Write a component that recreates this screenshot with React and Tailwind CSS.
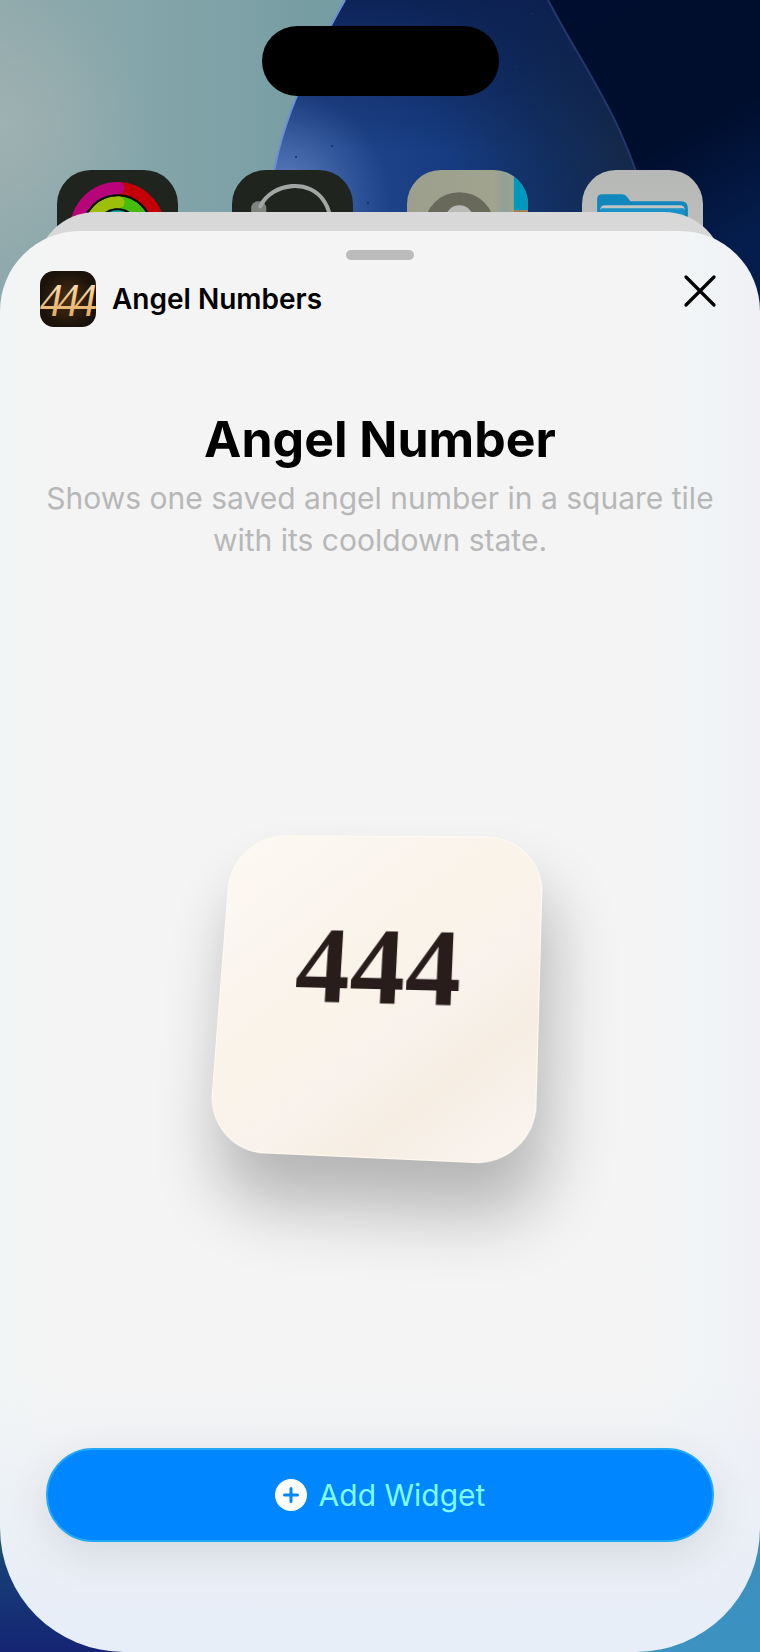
import React from 'react';
import { X } from 'lucide-react';

const Wallpaper = () => (
    <svg
        className="absolute inset-0 h-full w-full"
        viewBox="0 0 760 1652"
        preserveAspectRatio="none"
        aria-hidden="true"
    >
        <defs>
            <linearGradient id="sky" x1="0" y1="0" x2="320" y2="0" gradientUnits="userSpaceOnUse">
                <stop offset="0" stopColor="#8fa9ac" />
                <stop offset="0.5" stopColor="#83a5aa" />
                <stop offset="1" stopColor="#769da2" />
            </linearGradient>
            <radialGradient id="haze" cx="0" cy="125" r="150" gradientUnits="userSpaceOnUse">
                <stop offset="0" stopColor="#a3b3b3" stopOpacity="0.8" />
                <stop offset="1" stopColor="#a3b3b3" stopOpacity="0" />
            </radialGradient>
            <linearGradient id="night" x1="560" y1="0" x2="700" y2="260" gradientUnits="userSpaceOnUse">
                <stop offset="0" stopColor="#000d2e" />
                <stop offset="0.6" stopColor="#000e2e" />
                <stop offset="1" stopColor="#051d4c" />
            </linearGradient>
            <linearGradient id="petal" x1="300" y1="170" x2="600" y2="80" gradientUnits="userSpaceOnUse">
                <stop offset="0" stopColor="#24498f" />
                <stop offset="0.45" stopColor="#173c82" />
                <stop offset="0.75" stopColor="#122f62" />
                <stop offset="1" stopColor="#14284a" />
            </linearGradient>
            <linearGradient id="petalShade" x1="0" y1="0" x2="0" y2="150" gradientUnits="userSpaceOnUse">
                <stop offset="0" stopColor="#0b1f4f" stopOpacity="0.85" />
                <stop offset="1" stopColor="#0b1f4f" stopOpacity="0" />
            </linearGradient>
            <radialGradient id="petalGlow" cx="280" cy="200" r="110" gradientUnits="userSpaceOnUse">
                <stop offset="0" stopColor="#7b99d2" stopOpacity="0.8" />
                <stop offset="1" stopColor="#5578bd" stopOpacity="0" />
            </radialGradient>
            <linearGradient id="floor" x1="0" y1="1400" x2="0" y2="1652" gradientUnits="userSpaceOnUse">
                <stop offset="0" stopColor="#2f8a93" />
                <stop offset="0.58" stopColor="#14566f" />
                <stop offset="0.66" stopColor="#173f78" />
                <stop offset="1" stopColor="#152473" />
            </linearGradient>
            <linearGradient id="floorRight" x1="0" y1="1400" x2="0" y2="1652" gradientUnits="userSpaceOnUse">
                <stop offset="0" stopColor="#1d5a86" />
                <stop offset="0.6" stopColor="#3a8fbc" />
                <stop offset="1" stopColor="#3c93c2" />
            </linearGradient>
        </defs>
        <rect width="760" height="1652" fill="url(#sky)" />
        <rect width="200" height="330" fill="url(#haze)" />
        <path d="M540 0H760V700H620Z" fill="url(#night)" />
        <path d="M345 0H548C590 80 624 115 654 230H266C272 140 300 80 345 0Z" fill="url(#petal)" />
        <path d="M345 0H548C590 80 624 115 654 230H266C272 140 300 80 345 0Z" fill="url(#petalShade)" />
        <path d="M345 0H548C590 80 624 115 654 230H266C272 140 300 80 345 0Z" fill="url(#petalGlow)" />
        <path d="M345 0C300 80 272 140 266 230" fill="none" stroke="#6c8fd6" strokeWidth="2" />
        <path d="M548 0C590 80 624 115 654 230" fill="none" stroke="#22386c" strokeWidth="2" />
        <g fill="#123068">
            <circle cx="532" cy="14" r="1" />
            <circle cx="515" cy="67" r="1" />
            <circle cx="547" cy="109" r="1" />
            <circle cx="332" cy="146" r="1" />
            <circle cx="296" cy="157" r="1" />
            <circle cx="569" cy="154" r="1" />
            <circle cx="590" cy="164" r="1" />
            <circle cx="540" cy="180" r="1" />
            <circle cx="368" cy="203" r="1" />
        </g>
        <rect y="1300" width="380" height="352" fill="url(#floor)" />
        <rect x="380" y="1300" width="380" height="352" fill="url(#floorRight)" />
    </svg>
);

const FitnessIcon = () => (
    <svg className="h-full w-full" viewBox="0 0 120 120">
        <rect width="120" height="120" fill="#20241f" />
        <g fill="none" strokeWidth="12">
            <path d="M60 18A41 41 0 0 0 60 100" stroke="#b9037a" />
            <path d="M60 18A41 41 0 0 1 60 100" stroke="#c40006" />
            <path d="M60 32A27 27 0 0 0 60 86" stroke="#9cc00a" />
            <path d="M60 32A27 27 0 0 1 60 86" stroke="#45bd0c" />
            <circle cx="60" cy="59" r="15" stroke="#16a9a3" strokeWidth="11" />
            <circle cx="60" cy="59" r="34" stroke="#0b0c0a" strokeWidth="2" />
            <circle cx="60" cy="59" r="20" stroke="#0b0c0a" strokeWidth="2" />
        </g>
        <circle cx="61" cy="18" r="6" fill="#b9037a" />
        <circle cx="61" cy="32" r="6" fill="#9cc00a" />
    </svg>
);

const HeadsetIcon = () => (
    <svg className="h-full w-full" viewBox="0 0 120 120">
        <rect width="120" height="120" fill="#20241f" />
        <rect x="19" y="31" width="15" height="30" rx="7" fill="#808280" />
        <path d="M28 36C40 12 78 8 92 32Q97 40 98 52" fill="none" stroke="#a4a6a6" strokeWidth="4" strokeLinecap="round" />
    </svg>
);

const SettingsIcon = () => (
    <svg className="h-full w-full" viewBox="0 0 120 120">
        <defs>
            <linearGradient id="sand" x1="0" y1="0" x2="1" y2="0">
                <stop offset="0" stopColor="#9c9f8d" />
                <stop offset="0.72" stopColor="#a0a38e" />
                <stop offset="0.82" stopColor="#8fa196" />
                <stop offset="0.88" stopColor="#a0a38e" />
            </linearGradient>
        </defs>
        <rect width="120" height="120" fill="url(#sand)" />
        <rect x="106" width="14" height="40" fill="#0098bd" />
        <rect x="106" y="40" width="14" height="3" fill="#a77b45" />
        <circle cx="52" cy="57" r="35" fill="#68695a" />
        <circle cx="52" cy="49" r="14" fill="#b9bab8" />
    </svg>
);

const FilesIcon = () => (
    <svg className="h-full w-full" viewBox="0 0 120 120">
        <defs>
            <linearGradient id="paper" x1="0" y1="0" x2="0" y2="1">
                <stop offset="0" stopColor="#b6b8b5" />
                <stop offset="1" stopColor="#c4c4c4" />
            </linearGradient>
        </defs>
        <rect width="120" height="120" fill="url(#paper)" />
        <path
            d="M15 90V29Q15 24 20 24H40Q43 24 45 27L48 31H98Q105 31 105 38V90Z"
            fill="#1287bd"
        />
        <path d="M18 40Q18 35 23 35H97Q102 35 102 40Z" fill="#bfc4c4" />
        <rect x="18" y="38" width="84" height="60" rx="2" fill="#1a92c8" />
    </svg>
);

const apps = [
    { name: 'Fitness', Icon: FitnessIcon },
    { name: 'Headset', Icon: HeadsetIcon },
    { name: 'Settings', Icon: SettingsIcon },
    { name: 'Files', Icon: FilesIcon },
];

const AngelNumbersIcon = () => (
    <svg className="h-14 w-14 shrink-0 rounded-[14px]" viewBox="0 0 56 56">
        <defs>
            <radialGradient id="ember">
                <stop offset="0" stopColor="#4a2f10" />
                <stop offset="1" stopColor="#1a120b" />
            </radialGradient>
            <linearGradient id="gold" x1="0" y1="0" x2="0" y2="1">
                <stop offset="0" stopColor="#ffe9c2" />
                <stop offset="1" stopColor="#dd9d4e" />
            </linearGradient>
        </defs>
        <rect width="56" height="56" fill="url(#ember)" />
        <text
            x="0 17 34"
            y="45"
            fontFamily="Liberation Serif, serif"
            fontStyle="italic"
            fontSize="46"
            fill="url(#gold)"
        >
            444
        </text>
    </svg>
);

const AddWidgetButton = () => (
    <button
        type="button"
        className="flex h-[94px] w-full items-center justify-center gap-3 rounded-full border-2 border-[#22a8f8] bg-[#0086ff] text-[30px] text-[#7dfdfd] shadow-[0_12px_40px_rgba(60,60,60,0.12)]"
    >
        <svg className="h-8 w-8" viewBox="0 0 32 32" aria-hidden="true">
            <circle cx="16" cy="16" r="16" fill="#fff" />
            <path d="M16 9.5V22.5M9.5 16H22.5" stroke="#0086ff" strokeWidth="3" strokeLinecap="round" />
        </svg>
        Add Widget
    </button>
);

const WidgetTile = () => (
    <div className="perspective-[1200px]">
        <div className="flex h-[328px] w-[323px] rotate-x-[11deg] rotate-y-[-8deg] rotate-z-[3deg] justify-center rounded-[58px] border border-[#fffaf0] bg-[linear-gradient(140deg,#fdf9f2_0%,#fbf5ef_25%,#faf3e9_45%,#f9f2ec_60%,#f6eee3_75%,#f9f2ed_92%)] pt-[76px] shadow-[10px_48px_64px_rgba(0,0,0,0.26)]">
            <span className="font-['Liberation_Serif',serif] text-[112px] leading-[120px] font-bold text-[#281d1a]">
                444
            </span>
        </div>
    </div>
);

const App = () => (
    <div className="relative flex min-h-screen flex-col overflow-hidden font-[Inter,'Liberation_Sans',sans-serif]">
        <Wallpaper />

        <div className="relative flex flex-col pt-[26px]">
            <div className="mx-auto h-[70px] w-[237px] rounded-[35px] bg-black" />
            <div className="mt-[74px] flex h-[42px] justify-between px-[57px]">
                {apps.map(({ name, Icon }) => (
                    <div
                        key={name}
                        className="h-[121px] w-[121px] shrink-0 overflow-hidden rounded-[34px]"
                        aria-label={name}
                        role="img"
                    >
                        <Icon />
                    </div>
                ))}
            </div>
        </div>

        <div className="relative mx-9 h-[76px] shrink-0 rounded-t-[60px] bg-[#d8d8d8]" />

        <main className="relative -mt-[57px] flex flex-1 flex-col rounded-t-[80px] rounded-b-[124px] bg-[linear-gradient(to_bottom,transparent_80%,#e8eef7_97%),linear-gradient(to_right,#f2f5f5_0%,#f4f4f4_8%,#f4f4f4_84%,#f1f4f6_93%,#f0f0f5_100%)] px-9 pt-[19px] pb-[110px]">
            <div className="mx-auto h-[10px] w-[68px] rounded-full bg-[#bbbbbc]" />

            <header className="mt-[11px] flex items-start justify-between px-1">
                <div className="flex items-center gap-4">
                    <AngelNumbersIcon />
                    <span className="text-[28px] font-semibold text-black">Angel Numbers</span>
                </div>
                <button type="button" aria-label="Close" className="-mr-2">
                    <X className="h-[56px] w-[56px] -my-2 text-black" strokeWidth={1.4} />
                </button>
            </header>

            <div className="mt-[82px] text-center">
                <h1 className="text-[50px] leading-[60px] font-bold text-black">Angel Number</h1>
                <p className="mt-2 text-[30px] leading-[42px] text-[#b7b7b8]">
                    Shows one saved angel number in a square tile with its cooldown state.
                </p>
            </div>

            <div className="flex flex-1 items-center justify-center pr-2 pb-6">
                <WidgetTile />
            </div>

            <div className="px-[10px]">
                <AddWidgetButton />
            </div>
        </main>
    </div>
);

export default App;
